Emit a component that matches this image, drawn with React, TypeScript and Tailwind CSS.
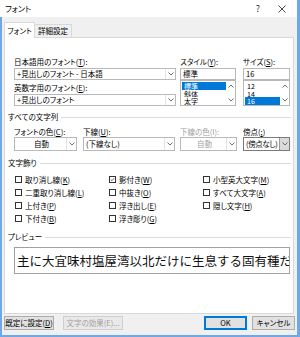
import type { ReactNode } from "react";

function Mn({ k }: { k: string }) {
  return (
    <>
      (<span className="underline underline-offset-1">{k}</span>)
    </>
  );
}

function Chevron({ up = false }: { up?: boolean }) {
  return (
    <svg width="6" height="4" viewBox="0 0 6 4">
      <polyline
        points={up ? "0.5,3.5 3,1 5.5,3.5" : "0.5,0.5 3,3 5.5,0.5"}
        fill="none"
        stroke="#606060"
        strokeWidth="0.9"
      />
    </svg>
  );
}

function Combo({
  text,
  className,
  center = false,
  disabled = false,
  focus = false,
}: {
  text: string;
  className: string;
  center?: boolean;
  disabled?: boolean;
  focus?: boolean;
}) {
  return (
    <div
      className={`flex bg-white border ${focus ? "border-[#7a7a7a]" : "border-[#b9b9b9]"} ${className}`}
    >
      <div
        className={`flex-1 min-w-0 flex items-center overflow-hidden whitespace-nowrap pl-[2px] ${center ? "justify-center" : ""} ${disabled ? "text-[#a0a0a0]" : "text-black"}`}
      >
        {text}
      </div>
      <div
        className={`w-[10px] shrink-0 flex items-center justify-center border-l ${focus ? "bg-[#dadada] border-[#9a9a9a]" : "border-[#e3e3e3]"}`}
      >
        <Chevron />
      </div>
    </div>
  );
}

function ListBox({ items, selected, className }: { items: string[]; selected: number; className: string }) {
  return (
    <div className={`flex bg-white border border-[#b9b9b9] ${className}`}>
      <div className="flex-1 flex flex-col pt-[1px] pl-[1px] text-[7px]">
        {items.map((it, i) => (
          <div
            key={it}
            className={`h-[8px] leading-[8px] px-[2px] overflow-hidden ${i === selected ? "bg-[#0078d7] text-white" : "text-black"}`}
          >
            {it}
          </div>
        ))}
      </div>
      <div className="w-[9px] flex flex-col justify-between items-center py-[3px]">
        <Chevron up />
        <Chevron />
      </div>
    </div>
  );
}

function Section({ title }: { title: string }) {
  return (
    <div className="flex items-center h-[10px] pl-[3px] pr-[2px] gap-[3px]">
      <span className="text-black whitespace-nowrap">{title}</span>
      <div className="flex-1 h-px bg-[#dcdcdc]" />
    </div>
  );
}

function Check({ label, checked = false }: { label: ReactNode; checked?: boolean }) {
  return (
    <div className="flex items-center h-[13px] gap-[3px]">
      <div className="w-[7px] h-[7px] border border-[#333333] bg-white flex items-center justify-center">
        {checked && (
          <svg width="7" height="7" viewBox="0 0 7 7">
            <polyline points="1,3.5 2.8,5.2 6,1.5" fill="none" stroke="#222" strokeWidth="0.9" />
          </svg>
        )}
      </div>
      <span className="whitespace-nowrap">{label}</span>
    </div>
  );
}

function Button({
  children,
  className,
  disabled = false,
  primary = false,
}: {
  children: ReactNode;
  className: string;
  disabled?: boolean;
  primary?: boolean;
}) {
  return (
    <div
      className={`h-[14px] flex items-center justify-center whitespace-nowrap border ${
        primary
          ? "bg-[#e1e1e1] border-[#0078d7] shadow-[inset_0_0_0_1px_#0078d7]"
          : disabled
            ? "bg-[#e9e9e9] border-[#cfcfcf] text-[#a0a0a0]"
            : "bg-[#e1e1e1] border-[#adadad]"
      } ${className}`}
    >
      {children}
    </div>
  );
}

export default function App() {
  return (
    <div className="w-[300px] h-[337px] flex flex-col bg-[#f0f0f0] text-[7.5px] leading-[10px] text-black [font-family:'Noto_Sans_CJK_JP',sans-serif] [font-feature-settings:'palt']">
      {/* Title bar */}
      <div className="h-[17px] bg-white flex items-center pl-[5px] pr-[11px] border-r-[3px] border-[#6ea8e6]">
        <span className="text-[8px] flex-1">フォント</span>
        <span className="text-[9px] text-[#333] mr-[18px]">?</span>
        <svg width="8" height="8" viewBox="0 0 8 8">
          <path d="M0.5 0.5 L7.5 7.5 M7.5 0.5 L0.5 7.5" stroke="#333" strokeWidth="0.9" />
        </svg>
      </div>

      {/* Body */}
      <div className="flex-1 flex flex-col border-l-2 border-r-[3px] border-b-2 border-[#6ea8e6]">
        {/* Tabs */}
        <div className="flex items-end h-[20px] pl-[2px]">
          <div className="h-[16px] w-[31px] bg-white border border-b-0 border-[#d9d9d9] flex items-center justify-center relative z-10 -mb-px">
            フォント
          </div>
          <div className="h-[13px] w-[37px] border border-b-0 border-l-0 border-[#d9d9d9] flex items-center justify-center">
            詳細設定
          </div>
        </div>

        {/* Panel */}
        <div className="ml-[2px] w-[290px] h-[277px] bg-white border border-[#d9d9d9] flex flex-col">
          {/* Font selection */}
          <div className="flex pt-[19px] pl-[9px]">
            <div className="w-[162px] flex flex-col">
              <div className="h-[10px]">
                日本語用のフォント<Mn k="T" />:
              </div>
              <Combo text="+見出しのフォント - 日本語" className="mt-[1px] h-[12px]" />
              <div className="h-[10px] mt-[3px]">
                英数字用のフォント<Mn k="E" />:
              </div>
              <Combo text="+見出しのフォント" className="mt-[1px] h-[12px]" />
            </div>
            <div className="w-[56px] ml-[4px] flex flex-col">
              <div className="h-[10px]">
                スタイル<Mn k="Y" />:
              </div>
              <div className="mt-[1px] h-[12px] bg-white border border-[#b9b9b9] flex items-center px-[2px]">標準</div>
              <ListBox items={["標準", "斜体", "太字"]} selected={0} className="h-[26px]" />
            </div>
            <div className="w-[47px] ml-[7px] flex flex-col">
              <div className="h-[10px]">
                サイズ<Mn k="S" />:
              </div>
              <div className="mt-[1px] h-[12px] bg-white border border-[#b9b9b9] flex items-center px-[2px]">16</div>
              <ListBox items={["12", "14", "16"]} selected={2} className="h-[26px]" />
            </div>
          </div>

          {/* All text */}
          <div className="mt-[6px]">
            <Section title="すべての文字列" />
          </div>
          <div className="flex pl-[9px] mt-[5px]">
            <div className="w-[63px] flex flex-col">
              <div className="h-[10px]">
                フォントの色<Mn k="C" />:
              </div>
              <Combo text="自動" center className="h-[14px]" />
            </div>
            <div className="w-[92px] ml-[6px] flex flex-col">
              <div className="h-[10px]">
                下線<Mn k="U" />:
              </div>
              <Combo text="(下線なし)" className="h-[14px]" />
            </div>
            <div className="w-[57px] ml-[5px] flex flex-col">
              <div className="h-[10px] text-[#a0a0a0]">下線の色(I):</div>
              <Combo text="自動" center disabled className="h-[14px]" />
            </div>
            <div className="w-[47px] ml-[6px] flex flex-col">
              <div className="h-[10px]">
                傍点<Mn k=";" />
              </div>
              <Combo text="(傍点なし)" focus className="h-[14px] tracking-[-0.4px]" />
            </div>
          </div>

          {/* Effects */}
          <div className="mt-[7px]">
            <Section title="文字飾り" />
          </div>
          <div className="flex pl-[10px] mt-[5px]">
            <div className="w-[94px] flex flex-col">
              <Check label={<>取り消し線<Mn k="K" /></>} />
              <Check label={<>二重取り消し線<Mn k="L" /></>} />
              <Check label={<>上付き<Mn k="P" /></>} />
              <Check label={<>下付き<Mn k="B" /></>} />
            </div>
            <div className="w-[94px] flex flex-col">
              <Check checked label={<>影付き<Mn k="W" /></>} />
              <Check label={<>中抜き<Mn k="O" /></>} />
              <Check label={<>浮き出し<Mn k="E" /></>} />
              <Check label={<>浮き彫り<Mn k="G" /></>} />
            </div>
            <div className="flex flex-col">
              <Check label={<>小型英大文字<Mn k="M" /></>} />
              <Check label={<>すべて大文字<Mn k="A" /></>} />
              <Check label={<>隠し文字<Mn k="H" /></>} />
            </div>
          </div>

          {/* Preview */}
          <div className="mt-[7px]">
            <Section title="プレビュー" />
          </div>
          <div className="ml-[9px] mt-[5px] w-[276px] h-[27px] border border-[#a0a0a0] flex items-center overflow-hidden pl-[2px]">
            <span className="whitespace-nowrap text-[12.5px] leading-[14px] [font-feature-settings:normal] text-[#111]">
              主に大宜味村塩屋湾以北だけに生息する固有種だ
            </span>
          </div>
        </div>

        {/* Buttons */}
        <div className="flex items-center mt-[2px] pl-[2px]">
          <Button className="w-[50px]">
            既定に設定<Mn k="D" />
          </Button>
          <Button disabled className="w-[60px] ml-[9px]">
            文字の効果(E)...
          </Button>
          <Button primary className="w-[43px] ml-[81px]">
            OK
          </Button>
          <Button className="w-[43px] ml-[5px]">キャンセル</Button>
        </div>
      </div>
    </div>
  );
}
